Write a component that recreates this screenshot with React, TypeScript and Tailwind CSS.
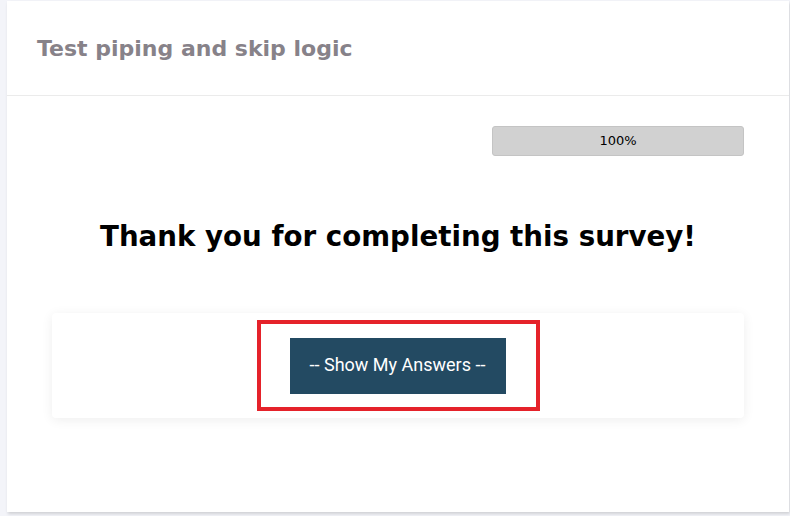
export default function App() {
  return (
    <div className="min-h-screen bg-[#f3f4f9] pl-[7px] pr-px pt-px">
      <div className="flex h-[511px] flex-col bg-white shadow-[1px_2px_3px_rgba(0,0,0,0.15)]">
        {/* Survey title */}
        <div className="flex h-[95px] items-center border-b border-[#ebebeb] px-[30px]">
          <h1 className="font-['DejaVu_Sans',sans-serif] text-[22px] font-bold text-[#878289]">
            Test piping and skip logic
          </h1>
        </div>

        <div className="flex flex-col px-[45px] pt-[30px]">
          {/* Progress */}
          <div className="flex justify-end">
            <div className="flex h-[30px] w-[252px] items-center justify-center rounded-[3px] border border-[#c4c4c4] bg-[#d1d1d1] font-['DejaVu_Sans',sans-serif] text-[13px] text-black">
              100%
            </div>
          </div>

          <h2 className="mt-[61px] text-center font-['DejaVu_Sans',sans-serif] text-[27.7px] font-bold leading-[40px] text-black">
            Thank you for completing this survey!
          </h2>

          {/* Answers */}
          <div className="mt-[56px] flex h-[105px] items-center justify-center rounded-[4px] bg-white shadow-[0_2px_12px_rgba(0,0,0,0.07)]">
            <div className="border-4 border-[#e5222a] pb-[13px] pl-[29px] pr-[30px] pt-[14px]">
              <button className="h-[56px] w-[216px] bg-[#234a62] pb-[3px] font-['Roboto',sans-serif] text-[18px] text-white">
                -- Show My Answers --
              </button>
            </div>
          </div>
        </div>
      </div>
    </div>
  );
}
